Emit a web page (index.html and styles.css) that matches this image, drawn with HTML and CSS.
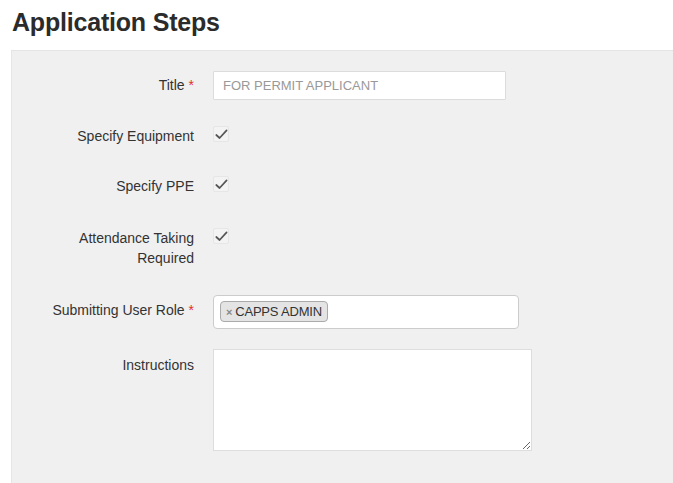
FILE: index.html
```html
<!DOCTYPE html>
<html lang="en">
<head>
<meta charset="utf-8">
<title>Application Steps</title>
<link rel="stylesheet" href="styles.css">
</head>
<body>
  <h1 class="page-title">Application Steps</h1>
  <div class="panel">
    <div class="field field--title">
      <label class="field__label">Title <span class="req">*</span></label>
      <input class="text-input" type="text" value="FOR PERMIT APPLICANT">
    </div>
    <div class="field field--equip">
      <label class="field__label field__label--plain">Specify Equipment</label>
      <span class="check"><svg viewBox="0 0 15 15" width="15" height="15"><path d="M2.3 8 L5.6 11 L12.6 3.4" fill="none" stroke="#555" stroke-width="1.7" stroke-linecap="round" stroke-linejoin="round"/></svg></span>
    </div>
    <div class="field field--ppe">
      <label class="field__label field__label--plain">Specify PPE</label>
      <span class="check"><svg viewBox="0 0 15 15" width="15" height="15"><path d="M2.3 8 L5.6 11 L12.6 3.4" fill="none" stroke="#555" stroke-width="1.7" stroke-linecap="round" stroke-linejoin="round"/></svg></span>
    </div>
    <div class="field field--attend">
      <label class="field__label field__label--plain">Attendance Taking<br>Required</label>
      <span class="check"><svg viewBox="0 0 15 15" width="15" height="15"><path d="M2.3 8 L5.6 11 L12.6 3.4" fill="none" stroke="#555" stroke-width="1.7" stroke-linecap="round" stroke-linejoin="round"/></svg></span>
    </div>
    <div class="field field--role">
      <label class="field__label field__label--select">Submitting User Role <span class="req">*</span></label>
      <div class="multi-select">
        <span class="tag"><span class="tag__remove">×</span>CAPPS ADMIN</span>
      </div>
    </div>
    <div class="field">
      <label class="field__label field__label--area">Instructions</label>
      <textarea class="text-area"></textarea>
    </div>
  </div>
</body>
</html>
```

FILE: styles.css
```css
html, body {
  margin: 0;
  padding: 0;
  background: #ffffff;
  font-family: "Liberation Sans", Arial, sans-serif;
  color: #333333;
}

.page-title {
  margin: 0;
  padding: 8px 0 0 12px;
  height: 50px;
  box-sizing: border-box;
  font-size: 25px;
  line-height: 28px;
  font-weight: bold;
  color: #2b2b2b;
  letter-spacing: -0.2px;
}

.panel {
  margin-left: 11px;
  height: 433px;
  box-sizing: border-box;
  background: #f0f0f0;
  border-top: 1px solid #e4e4e4;
  border-left: 1px solid #e6e6e6;
  padding-top: 20px;
  display: flex;
  flex-direction: column;
}

.field {
  display: flex;
  align-items: flex-start;
  gap: 19px;
}

.field--title { margin-bottom: 26px; }
.field--equip { margin-bottom: 30px; }
.field--ppe { margin-bottom: 32px; }
.field--attend { margin-bottom: 27px; }
.field--role { margin-bottom: 20px; }

.field__label {
  width: 182px;
  flex: none;
  text-align: right;
  font-size: 14px;
  line-height: 20px;
  color: #333333;
  padding-top: 4px;
}

.field__label--plain { padding-top: 0; }
.field__label--select { padding-top: 5px; }
.field__label--area { padding-top: 6px; }

.req {
  color: #e0302a;
  font-size: 14px;
}

.text-input {
  width: 293px;
  height: 29px;
  box-sizing: border-box;
  margin: 0;
  border: 1px solid #dcdcdc;
  border-radius: 1px;
  background: #ffffff;
  padding: 0 9px;
  font-family: "Liberation Sans", Arial, sans-serif;
  font-size: 13px;
  color: #999999;
  outline: none;
}

.check {
  margin-top: 0;
  margin-left: 0;
  width: 16px;
  height: 16px;
  box-sizing: border-box;
  border: 1px solid #e6e6e6;
  border-radius: 2px;
  background: #f3f3f3;
  display: flex;
  align-items: center;
  justify-content: center;
}

.check svg {
  display: block;
  flex: none;
}

.multi-select {
  width: 306px;
  height: 34px;
  box-sizing: border-box;
  border: 1px solid #cccccc;
  border-radius: 4px;
  background: #ffffff;
  padding: 5px 6px;
  display: flex;
  align-items: flex-start;
}

.tag {
  display: inline-flex;
  align-items: center;
  height: 21px;
  box-sizing: border-box;
  padding: 0 5px 0 5px;
  background: #e4e4e4;
  border: 1px solid #aaaaaa;
  border-radius: 4px;
  font-size: 13px;
  color: #333333;
  letter-spacing: -0.2px;
}

.tag__remove {
  color: #888888;
  font-weight: bold;
  font-size: 11px;
  margin-right: 3px;
}

.text-area {
  width: 319px;
  height: 102px;
  box-sizing: border-box;
  margin: 0;
  border: 1px solid #dddddd;
  background: #ffffff;
  resize: both;
  font-family: "Liberation Sans", Arial, sans-serif;
  font-size: 13px;
  outline: none;
}
```
